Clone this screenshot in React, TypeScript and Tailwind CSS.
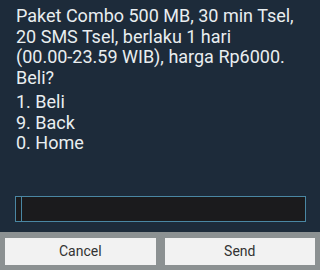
export default function App() {
  return (
    <div className="w-[320px] h-[270px] flex flex-col bg-[#8c9192] font-['Roboto',sans-serif]">
      <div className="h-[232px] bg-[#1d2b3a] flex flex-col px-[15px]">
        <div className="pt-[6px] pl-[1px] text-[18px] leading-[20.5px] text-[#e9eef0] whitespace-nowrap">
          <p>
            Paket Combo 500 MB, 30 min Tsel,
            <br />
            20 SMS Tsel, berlaku 1 hari
            <br />
            (00.00-23.59 WIB), harga Rp6000.
            <br />
            Beli?
          </p>
          <div className="mt-[4px]">
            <p>1. Beli</p>
            <p>9. Back</p>
            <p>0. Home</p>
          </div>
        </div>
        <div className="mt-auto mb-[10px] h-[26px] w-[291px] border border-[#4a87a3] bg-[#1b1b1d] flex items-stretch pl-[5px]">
          <div className="w-px bg-[#4a87a3]" />
        </div>
      </div>
      <div className="flex-1 flex gap-[9px] px-[5px] pt-[6px] pb-[5px]">
        <button className="flex-1 bg-[#f2f2f2] text-[#333] text-[14px]">Cancel</button>
        <button className="flex-1 bg-[#f2f2f2] text-[#333] text-[14px]">Send</button>
      </div>
    </div>
  );
}
